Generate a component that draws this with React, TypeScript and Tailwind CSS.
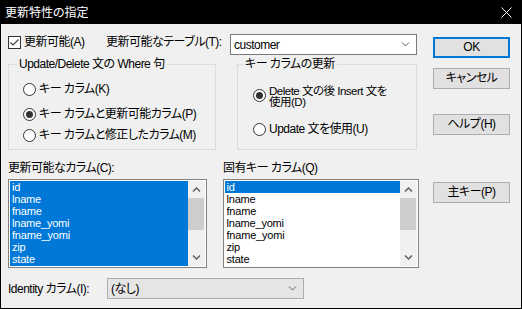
import React from "react";

const upd = ["id", "lname", "fname", "lname_yomi", "fname_yomi", "zip", "state"];

function Chevron({ up = false, w = 1 }: { up?: boolean; w?: number }) {
  return (
    <svg width="9" height="5" viewBox="0 0 9 5" className="shrink-0">
      <path d={up ? "M1 4.5 L4.5 1 L8 4.5" : "M1 0.5 L4.5 4 L8 0.5"} fill="none" stroke="#606060" strokeWidth={w} />
    </svg>
  );
}

function Radio({ checked = false }: { checked?: boolean }) {
  return (
    <span className="w-[13px] h-[13px] shrink-0 rounded-full border border-[#333333] bg-white flex items-center justify-center">
      {checked && <span className="w-[7px] h-[7px] rounded-full bg-[#333333]" />}
    </span>
  );
}

function Button({ label, focused = false, className = "" }: { label: string; focused?: boolean; className?: string }) {
  return (
    <button
      className={`w-[77px] h-[21px] flex items-center justify-center bg-[#e1e1e1] text-black leading-[13px] ${
        focused ? "border-2 border-[#0078d7]" : "border border-[#adadad]"
      } ${className}`}
    >
      {label}
    </button>
  );
}

function ListBox({ items, allSelected, width }: { items: string[]; allSelected: boolean; width: string }) {
  return (
    <div className={`${width} h-[89px] border border-[#828282] bg-white p-[1px] flex`}>
      <div
        className={`flex-1 flex flex-col overflow-hidden text-[11px] tracking-[-0.2px] ${
          allSelected ? "bg-[#0078d7] text-white" : "text-black"
        }`}
      >
        {items.map((it, i) => (
          <div
            key={it}
            className={`h-[12px] leading-[12px] px-[2px] ${!allSelected && i === 0 ? "bg-[#0078d7] text-white" : ""}`}
          >
            {it}
          </div>
        ))}
      </div>
      <div className="w-[17px] bg-[#f0f0f0] flex flex-col">
        <div className="h-[17px] flex items-center justify-center">
          <Chevron up w={1.5} />
        </div>
        <div className="h-[32px] mr-[1px] bg-[#cdcdcd]" />
        <div className="flex-1" />
        <div className="h-[17px] flex items-center justify-center">
          <Chevron w={1.5} />
        </div>
      </div>
    </div>
  );
}

export default function App() {
  return (
    <div className="w-[522px] h-[309px] border border-black bg-[#f0f0f0] flex flex-col text-[12px] tracking-[-0.5px] text-black [font-family:'Liberation_Sans','Noto_Sans_CJK_JP',sans-serif] [font-feature-settings:'palt'] overflow-hidden">
      {/* タイトルバー */}
      <div className="h-[23px] bg-black text-white flex items-center justify-between pl-[4px] pr-[9px]">
        <span className="leading-[14px] tracking-normal">更新特性の指定</span>
        <svg width="11" height="11" viewBox="0 0 11 11">
          <path d="M0.5 0.5 L10.5 10.5 M10.5 0.5 L0.5 10.5" stroke="white" strokeWidth="1" />
        </svg>
      </div>

      <div className="flex pl-[7px] pt-[10px] gap-[14px]">
        {/* 左側 */}
        <div className="w-[411px] flex flex-col">
          <div className="flex items-start h-[21px]">
            <label className="w-[98px] flex items-center gap-[3px] mt-[2px] h-[13px]">
              <span className="w-[13px] h-[13px] border border-[#333333] bg-white flex items-center justify-center">
                <svg width="11" height="11" viewBox="0 0 11 11">
                  <path d="M1.5 5.5 L4 8 L9.5 2.5" fill="none" stroke="#444444" strokeWidth="1.2" />
                </svg>
              </span>
              <span className="leading-[13px]">更新可能(A)</span>
            </label>
            <span className="w-[124px] mt-[2px] leading-[13px]">更新可能なテーブル(T):</span>
            <div className="w-[187px] h-[21px] border border-[#7a7a7a] bg-white flex items-center justify-between pl-[3px] pr-[6px]">
              <span>customer</span>
              <Chevron />
            </div>
          </div>

          <div className="flex mt-[2px] gap-[21px]">
            <fieldset className="w-[208px] h-[93px] border border-[#dcdcdc] pl-[14px]">
              <legend className="ml-[-6px] px-[2px] leading-[14px]">Update/Delete 文の Where 句</legend>
              <div className="flex items-center gap-[3px] mt-[12px] h-[13px] leading-[13px]">
                <Radio />
                <span>キー カラム(K)</span>
              </div>
              <div className="flex items-center gap-[3px] mt-[12px] h-[13px] leading-[13px]">
                <Radio checked />
                <span>キー カラムと更新可能カラム(P)</span>
              </div>
              <div className="flex items-center gap-[3px] mt-[8px] h-[13px] leading-[13px]">
                <Radio />
                <span>キー カラムと修正したカラム(M)</span>
              </div>
            </fieldset>

            <fieldset className="w-[180px] h-[93px] border border-[#dcdcdc] pl-[15px]">
              <legend className="ml-[-10px] px-[2px] leading-[14px]">キー カラムの更新</legend>
              <div className="flex items-start gap-[3px] mt-[15px]">
                <span className="mt-[3px]">
                  <Radio checked />
                </span>
                <span className="leading-[11px] text-[11.5px]">
                  Delete 文の後 Insert 文を
                  <br />
                  使用(D)
                </span>
              </div>
              <div className="flex items-center gap-[3px] mt-[15px] h-[13px] leading-[13px]">
                <Radio />
                <span>Update 文を使用(U)</span>
              </div>
            </fieldset>
          </div>

          <div className="flex mt-[11px] gap-[16px] leading-[14px]">
            <span className="w-[199px]">更新可能なカラム(C):</span>
            <span>固有キー カラム(Q)</span>
          </div>

          <div className="flex mt-[4px] gap-[16px]">
            <ListBox items={upd} allSelected width="w-[199px]" />
            <ListBox items={upd} allSelected={false} width="w-[197px]" />
          </div>

          <div className="flex items-center mt-[10px] h-[21px]">
            <span className="w-[99px] leading-[14px]">Identity カラム(I):</span>
            <div className="w-[197px] h-[21px] border border-[#adadad] bg-[#e5e5e5] flex items-center justify-between pl-[3px] pr-[6px]">
              <span>(なし)</span>
              <Chevron />
            </div>
          </div>
        </div>

        {/* ボタン */}
        <div className="flex flex-col mt-[3px]">
          <Button label="OK" focused />
          <Button label="キャンセル" className="mt-[10px]" />
          <Button label="ヘルプ(H)" className="mt-[25px]" />
          <Button label="主キー(P)" className="mt-[47px]" />
        </div>
      </div>
    </div>
  );
}
